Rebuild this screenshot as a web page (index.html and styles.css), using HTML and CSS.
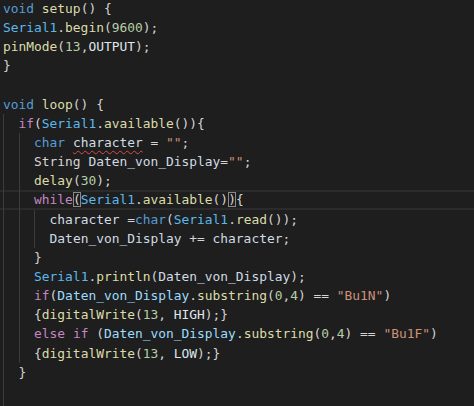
FILE: index.html
```html
<!DOCTYPE html>
<html>
<head>
    <title>sketch.ino</title>
    <link rel="stylesheet" href="styles.css">
</head>
<body>
    <div class="editor">
<div class="ln"><span class="kw">void</span> <span class="fn">setup</span>() {</div>
<div class="ln"><span class="obj">Serial1</span>.<span class="fn">begin</span>(<span class="num">9600</span>);</div>
<div class="ln"><span class="fn">pinMode</span>(<span class="num">13</span>,<span class="cst">OUTPUT</span>);</div>
<div class="ln">}</div>
<div class="ln"> </div>
<div class="ln"><span class="kw">void</span> <span class="fn">loop</span>() {</div>
<div class="ln"><span class="ig">  </span><span class="ctl">if</span>(<span class="obj">Serial1</span>.<span class="fn">available</span>()){</div>
<div class="ln"><span class="ig">  </span><span class="ig">  </span><span class="kw">char</span> <span class="var squiggle">character</span> = <span class="str">""</span>;</div>
<div class="ln"><span class="ig">  </span><span class="ig">  </span><span class="type">String</span> <span class="var">Daten_von_Display</span>=<span class="str">""</span>;</div>
<div class="ln"><span class="ig">  </span><span class="ig">  </span><span class="fn">delay</span>(<span class="num">30</span>);</div>
<div class="ln cur"><span class="ig">  </span><span class="ig">  </span><span class="ctl">while</span><span class="match">(</span><span class="obj">Serial1</span>.<span class="fn">available</span>()<span class="match">)</span>{</div>
<div class="ln"><span class="ig">  </span><span class="ig">  </span><span class="ig">  </span><span class="var">character</span> =<span class="kw">char</span>(<span class="obj">Serial1</span>.<span class="fn">read</span>());</div>
<div class="ln"><span class="ig">  </span><span class="ig">  </span><span class="ig">  </span><span class="var">Daten_von_Display</span> += <span class="var">character</span>;</div>
<div class="ln"><span class="ig">  </span><span class="ig">  </span>}</div>
<div class="ln"><span class="ig">  </span><span class="ig">  </span><span class="obj">Serial1</span>.<span class="fn">println</span>(<span class="var">Daten_von_Display</span>);</div>
<div class="ln"><span class="ig">  </span><span class="ig">  </span><span class="ctl">if</span>(<span class="var hl">Daten_von_Display</span>.<span class="fn">substring</span>(<span class="num">0</span>,<span class="num">4</span>) == <span class="str">"Bu1N"</span>)</div>
<div class="ln"><span class="ig">  </span><span class="ig">  </span>{<span class="fn">digitalWrite</span>(<span class="num">13</span>, <span class="cst">HIGH</span>);}</div>
<div class="ln"><span class="ig">  </span><span class="ig">  </span><span class="ctl">else</span> <span class="ctl">if</span> (<span class="var hl">Daten_von_Display</span>.<span class="fn">substring</span>(<span class="num">0</span>,<span class="num">4</span>) == <span class="str">"Bu1F"</span>)</div>
<div class="ln"><span class="ig">  </span><span class="ig">  </span>{<span class="fn">digitalWrite</span>(<span class="num">13</span>, <span class="cst">LOW</span>);}</div>
<div class="ln"><span class="ig">  </span>}</div>
<div class="ln"><span class="ig">  </span></div>
<div class="ln"><span class="ig">  </span></div>
    </div>
</body>
</html>
```

FILE: styles.css
```css
body {
    margin: 0;
    background: #1e1e1e;
    overflow: hidden;
}
.editor {
    font-family: "DejaVu Sans Mono", "Liberation Mono", monospace;
    font-size: 12.9px;
    line-height: 19.15px;
    color: #d4d4d4;
    padding-left: 3px;
    margin-top: -1px;
}
.ln {
    white-space: pre;
    height: 19.15px;
}
.ln.cur {
    box-shadow: inset 0 2px #2b2b2b, inset 0 -2px #2b2b2b;
    margin-left: -3px;
    padding-left: 3px;
}
.ig {
    display: inline-block;
    height: 19.15px;
    vertical-align: top;
    box-shadow: inset 1px 0 #3c3c3c;
}
.kw { color: #569cd6; }
.ctl { color: #c586c0; }
.fn { color: #dcdcaa; }
.num { color: #b5cea8; }
.str { color: #ce9178; }
.obj { color: #5cb8ea; }
.var { color: #d0dbe3; }
.var.hl { color: #9cdcfe; }
.type { color: #d4d4d4; }
.cst { color: #dfe6ec; }
.squiggle {
    text-decoration: underline wavy #d2504a;
    text-decoration-thickness: 1px;
    text-underline-offset: 3px;
}
.match {
    outline: 1px solid #8a8a8a;
    outline-offset: -1px;
}
```
